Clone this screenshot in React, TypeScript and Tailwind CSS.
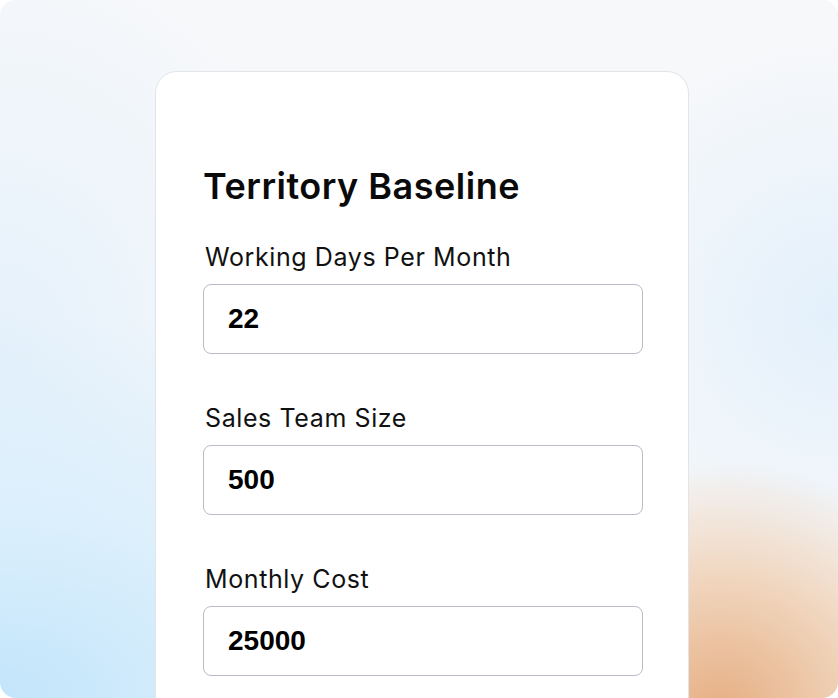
import React from "react";

type Field = {
  label: string;
  value: string;
};

const fields: Field[] = [
  { label: "Working Days Per Month", value: "22" },
  { label: "Sales Team Size", value: "500" },
  { label: "Monthly Cost", value: "25000" },
];

export default function App() {
  return (
    <div className="w-[838px] h-[698px] overflow-hidden rounded-2xl bg-[#f7f8fa] bg-[radial-gradient(ellipse_75%_55%_at_0%_100%,#c2e5fb_0%,rgba(210,236,252,0.7)_45%,rgba(230,243,252,0)_100%),radial-gradient(ellipse_32%_36%_at_86%_102%,#e6ae82_0%,rgba(238,202,170,0.8)_50%,rgba(244,226,212,0)_100%),radial-gradient(ellipse_35%_40%_at_100%_45%,#e3f0fb_0%,rgba(230,242,251,0)_100%),radial-gradient(ellipse_40%_60%_at_0%_50%,#e5f1fb_0%,rgba(229,241,251,0)_100%)]">
      <div
        className="ml-[155px] mt-[71px] w-[534px] h-[700px] rounded-[22px] border border-[#e2e4e9] bg-white pt-[92px] pl-[47px] pr-[46px]"
        style={{ fontFamily: "Inter, 'Noto Sans', sans-serif" }}
      >
        <h2 className="text-[36px] leading-[44px] font-semibold text-[#0a0a0a] tracking-[0.5px]">
          Territory Baseline
        </h2>

        <div className="mt-[34px] flex flex-col gap-[49px]">
          {fields.map((f) => (
            <div key={f.label} className="flex flex-col">
              <label className="ml-[2px] text-[25px] leading-[30px] font-normal text-[#111111] tracking-[0.6px]">
                {f.label}
              </label>
              <input
                type="text"
                defaultValue={f.value}
                className="mt-[12px] h-[70px] w-[440px] rounded-lg border border-[#b9bcc7] bg-white pl-[24px] text-[28px] font-bold text-black outline-none"
                style={{ fontFamily: "'Liberation Sans', Arial, sans-serif" }}
              />
            </div>
          ))}
        </div>
      </div>
    </div>
  );
}
